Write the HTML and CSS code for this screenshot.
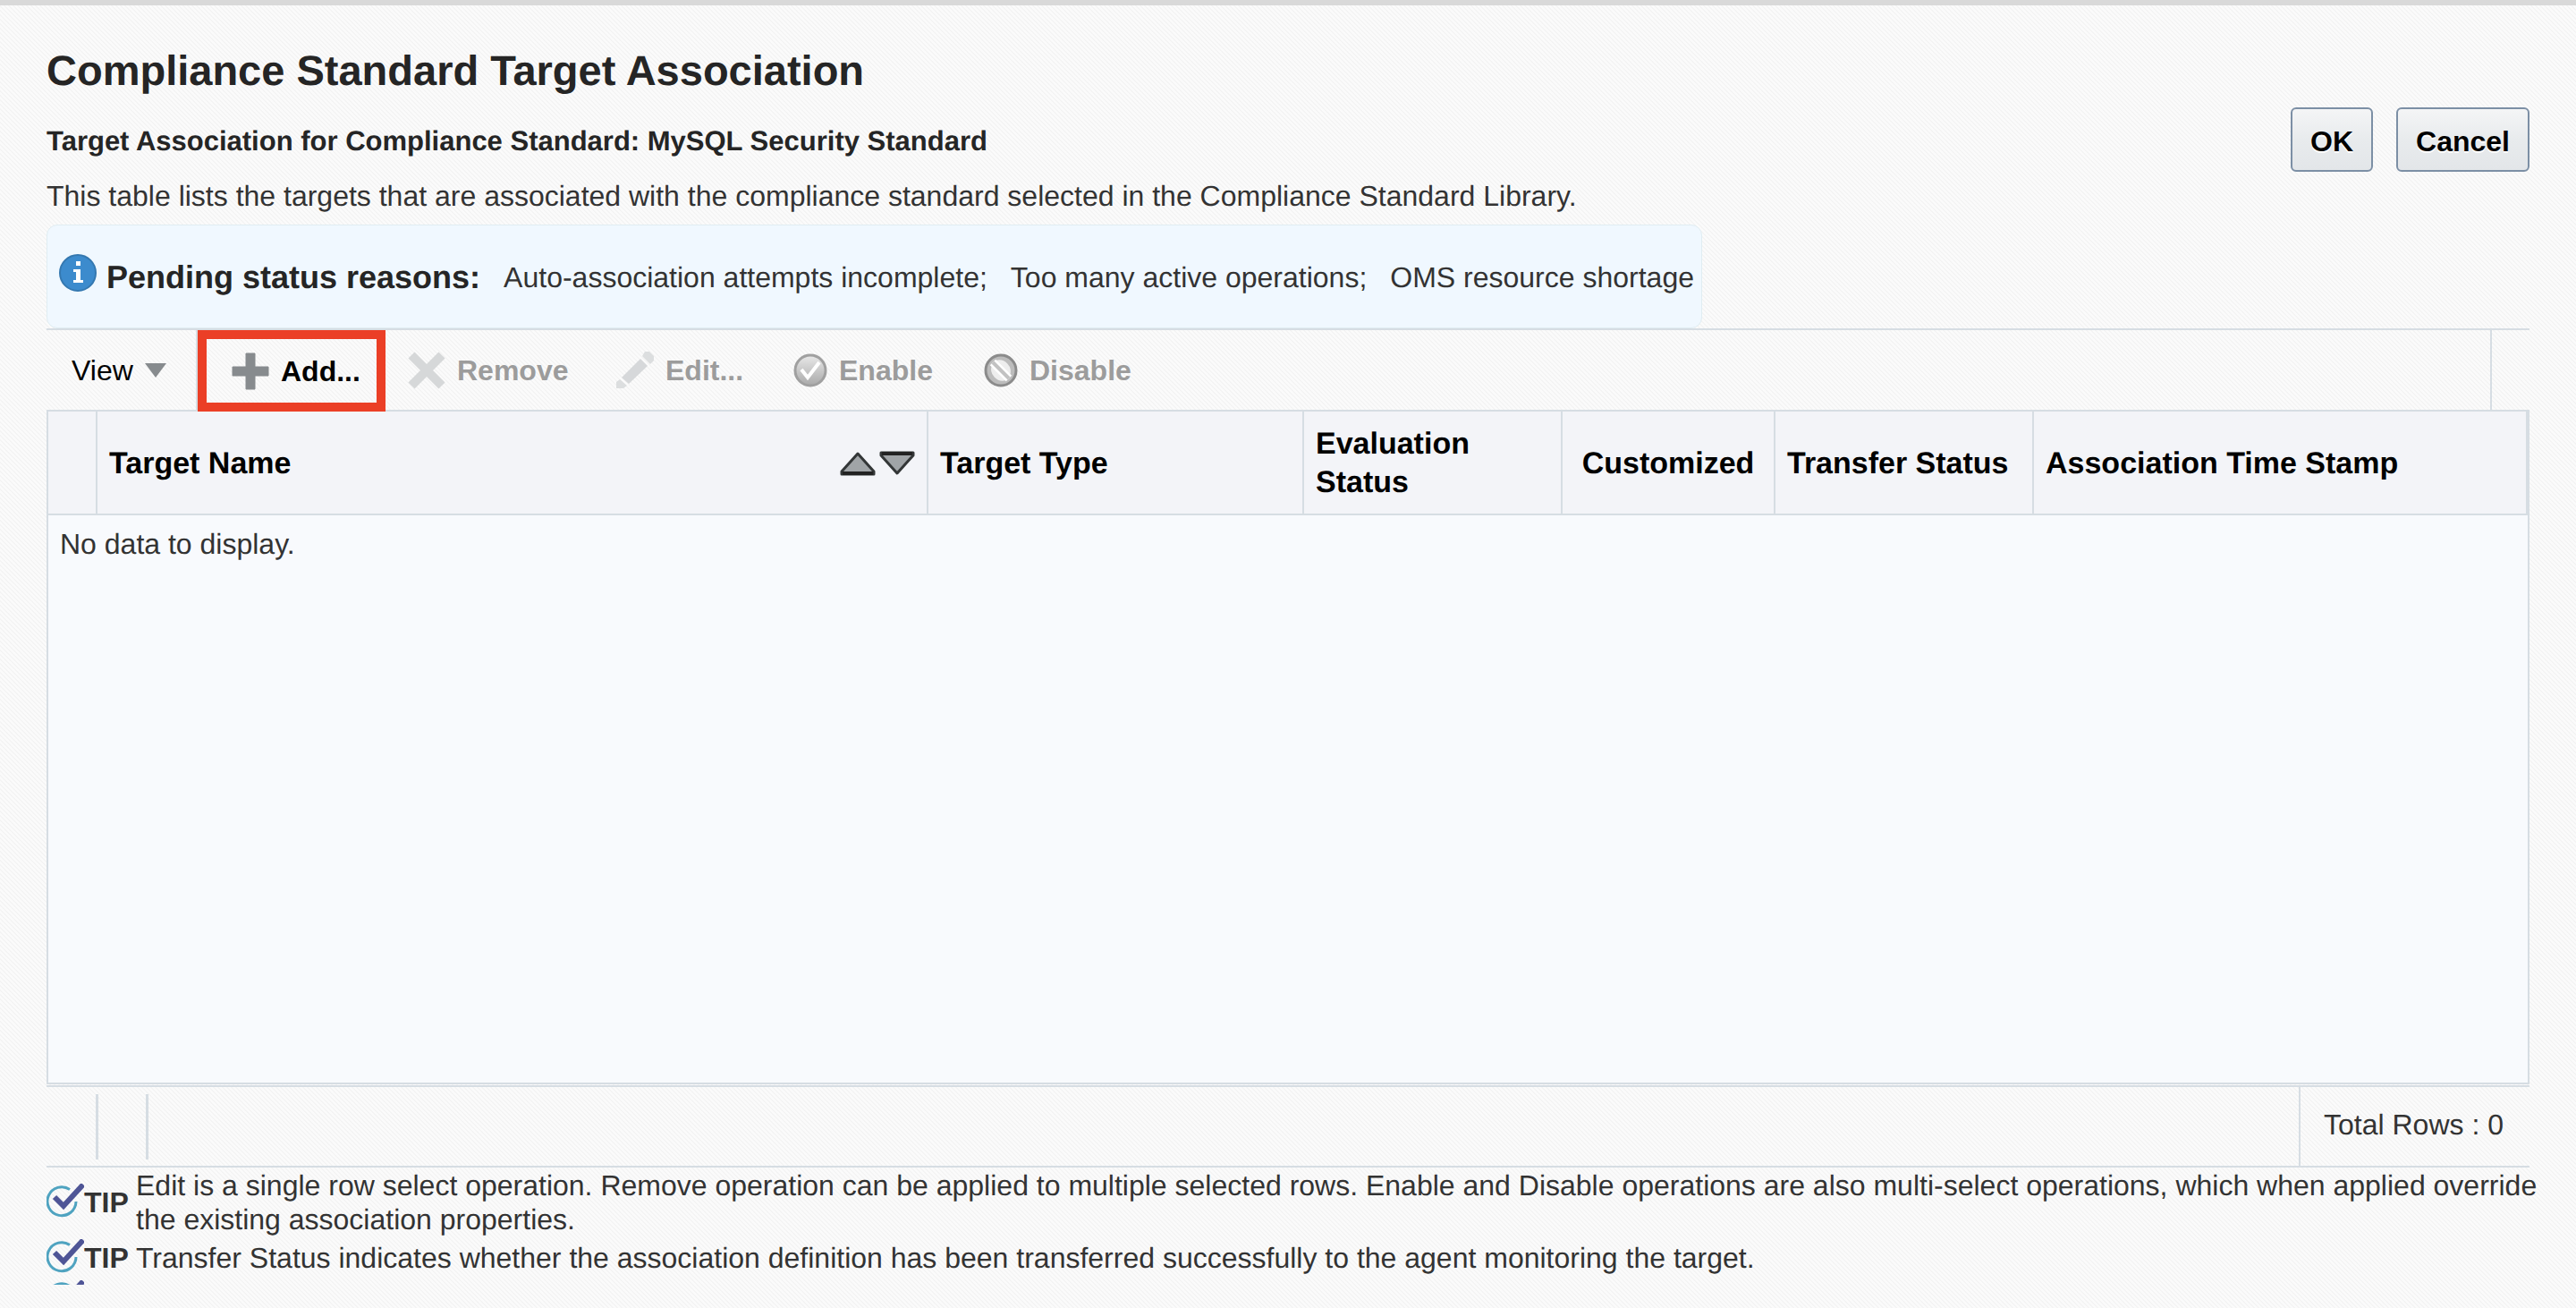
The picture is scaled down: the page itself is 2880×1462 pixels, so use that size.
FILE: index.html
```html
<!DOCTYPE html>
<html lang="en">
<head>
<meta charset="utf-8">
<title>Compliance Standard Target Association</title>
<link rel="stylesheet" href="styles.css">
</head>
<body>
<svg class="sprite" aria-hidden="true">
  <defs>
    <linearGradient id="metal" x1="0" y1="0" x2="0" y2="1">
      <stop offset="0" stop-color="#e9e9e9"/><stop offset="1" stop-color="#a9a9a9"/>
    </linearGradient>
    <symbol id="tip" viewBox="0 0 42 38">
      <path d="M26 6.500A16 16 0 1 0 33 20" fill="none" stroke="#4fa3c0" stroke-width="3"/>
      <path d="M9 15l10 10L41 1" fill="none" stroke="#4f5596" stroke-width="6"/>
    </symbol>
  </defs>
</svg>
<main class="page">
  <h1>Compliance Standard Target Association</h1>
  <div class="intro">
    <div class="intro-text">
      <h2>Target Association for Compliance Standard: MySQL Security Standard</h2>
      <p>This table lists the targets that are associated with the compliance standard selected in the Compliance Standard Library.</p>
    </div>
    <div class="actions">
      <button class="button" type="button">OK</button>
      <button class="button" type="button">Cancel</button>
    </div>
  </div>

  <div class="notice">
    <svg class="notice-icon" viewBox="0 0 42 42" aria-hidden="true"><circle cx="21" cy="21" r="20" fill="#3c8bcd" stroke="#3478b0" stroke-width="2"/><path d="M19 8h5v5h-5zM16 17h8v12h3v3H16v-3h3v-9h-3z" fill="#fff"/></svg>
    <strong>Pending status reasons:</strong>
    <span>Auto-association attempts incomplete;</span>
    <span>Too many active operations;</span>
    <span>OMS resource shortage</span>
  </div>

  <div class="toolbar" role="toolbar">
    <button class="tool view" type="button">View <svg width="24" height="18" viewBox="0 0 24 18" aria-hidden="true"><path d="M0 1h24L12 17z" fill="#878b8e"/></svg></button>
    <button class="tool add" type="button"><svg width="42" height="42" viewBox="0 0 42 42" aria-hidden="true"><path d="M16 1h10v15h15v10H26v15H16V26H1V16h15z" fill="#878b8e" stroke="#878b8e" stroke-linejoin="round"/></svg>Add...</button>
    <button class="tool remove" type="button" disabled><svg width="42" height="42" viewBox="0 0 42 42" aria-hidden="true"><path d="M4 4l34 34M38 4L4 38" stroke="#d6d8d9" stroke-width="10"/></svg>Remove</button>
    <button class="tool edit" type="button" disabled><svg width="42" height="42" viewBox="0 0 42 42" aria-hidden="true"><path d="M6 29L27 8l8 8-21 20z" fill="#d6d8da"/><path d="M4 31l8 7-4 3H0v-7zM29 5l3-5h5l5 5v5l-4 4z" fill="#dcdedf"/></svg>Edit...</button>
    <button class="tool enable" type="button" disabled><svg width="38" height="38" viewBox="0 0 38 38" aria-hidden="true"><circle cx="19" cy="19" r="17" fill="url(#metal)" stroke="#a0a0a0" stroke-width="3"/><path d="M9 18l7 9 13-17" fill="none" stroke="#fff" stroke-width="4"/></svg>Enable</button>
    <button class="tool" type="button" disabled><svg width="38" height="38" viewBox="0 0 38 38" aria-hidden="true"><circle cx="19" cy="19" r="17" fill="#bcbcbc" stroke="#8b8b8b" stroke-width="3"/><path d="M13 8a13 13 0 0 1 16 17zM9 13l16 17A13 13 0 0 1 9 13z" fill="#eee"/><path d="M10 10l18 18" stroke="#fff" stroke-width="9"/><path d="M10 10l18 18" stroke="#c2c2c2" stroke-width="4"/></svg>Disable</button>
    <span class="toolbar-end"></span>
  </div>

  <div class="grid">
    <table>
      <colgroup><col class="c-handle"><col class="c-name"><col class="c-type"><col class="c-eval"><col class="c-custom"><col class="c-transfer"><col></colgroup>
      <thead>
        <tr>
          <th></th>
          <th scope="col"><div class="sortable">Target Name
            <svg width="84" height="28" viewBox="0 0 84 28" aria-hidden="true"><g fill="#a0a4a7" stroke="#333637" stroke-width="3" stroke-linejoin="round"><path d="M2 26v-3L20 3l18 20v3z"/><path d="M46 2v3l18 20L82 5V2z"/></g><path d="M3 25h34M47 3h34" stroke="#222" stroke-width="4"/></svg></div></th>
          <th scope="col">Target Type</th>
          <th scope="col">Evaluation Status</th>
          <th scope="col" class="center">Customized</th>
          <th scope="col">Transfer Status</th>
          <th scope="col">Association Time Stamp</th>
        </tr>
      </thead>
      <tbody><tr><td colspan="7">No data to display.</td></tr></tbody>
    </table>
  </div>

  <div class="status">
    <span class="mark"></span><span class="mark"></span>
    <span class="total">Total Rows : 0</span>
  </div>

  <div class="tips">
    <div class="tip"><svg class="tip-icon" aria-hidden="true"><use href="#tip"/></svg><strong>TIP</strong><p>Edit is a single row select operation. Remove operation can be applied to multiple selected rows. Enable and Disable operations are also multi-select operations, which when applied override the existing association properties.</p></div>
    <div class="tip"><svg class="tip-icon" aria-hidden="true"><use href="#tip"/></svg><strong>TIP</strong><p>Transfer Status indicates whether the association definition has been transferred successfully to the agent monitoring the target.</p></div>
    <div class="tip"><svg class="tip-icon" aria-hidden="true"><use href="#tip"/></svg></div>
  </div>
</main>
</body>
</html>
```

FILE: styles.css
```css
* { box-sizing: border-box; }

body {
  margin: 0;
  color: #333;
  font: 32px/38px "Liberation Sans", Arial, sans-serif;
  text-rendering: geometricPrecision;
  background: linear-gradient(45deg, #fbfbfb 25%, #f4f4f4 25% 50%, #fbfbfb 50% 75%, #f4f4f4 75%) 0 0 / 5px 5px;
}

h1, h2, p { margin: 0; }

.sprite { position: absolute; width: 0; height: 0; }

.page {
  display: flex;
  flex-direction: column;
  height: 100vh;
  padding: 45px 52px 26px;
  border-top: 6px solid #d9d9d9;
}

h1 { color: #252525; font-size: 47px; line-height: 56px; }

.intro { display: flex; justify-content: space-between; padding-top: 13px; height: 144px; }
.intro-text { padding-top: 19px; }
h2 { color: #252525; font-size: 31px; line-height: 38px; }
.intro-text p { padding-top: 23px; }

.actions { display: flex; align-items: flex-start; gap: 26px; }
.button {
  height: 72px;
  padding: 4px 20px 0;
  border: 2px solid #7c8fa5;
  border-radius: 6px;
  background: linear-gradient(#f4f5f6, #e8ebed 50%, #e3e6e9);
  color: #000;
  font: bold 32px/38px "Liberation Sans", Arial, sans-serif;
  text-shadow: 0 2px 0 #fff;
}

.notice {
  display: flex;
  align-items: center;
  align-self: flex-start;
  gap: 26px;
  height: 116px;
  padding: 2px 8px 0 13px;
  border: 1px solid #e0edf2;
  border-radius: 12px;
  background: #f0f8ff;
}
.notice-icon { width: 42px; height: 42px; margin: 0 -15px 10px 0; }
.notice strong { color: #252525; font-size: 36px; }

.toolbar {
  display: flex;
  align-items: stretch;
  height: 93px;
  border: solid #d6dde3;
  border-width: 2px 0;
}
.tool {
  display: flex;
  align-items: center;
  gap: 13px;
  padding: 0;
  border: 0;
  background: none;
  color: #000;
  font: bold 32px/38px "Liberation Sans", Arial, sans-serif;
}
.tool:disabled { color: #9c9c9c; }
.view { width: 169px; padding-left: 28px; border-right: 2px solid #d6dde3; font-weight: normal; }
.add { width: 210px; margin-bottom: -2px; padding-left: 28px; border: 10px solid #eb3f26; }
.remove { width: 258px; padding-left: 25px; }
.edit { width: 198px; }
.enable { width: 213px; }
.toolbar-end { width: 44px; margin-left: auto; border-left: 2px solid #d6dde3; }

.grid {
  flex: 1;
  min-height: 0;
  border: 2px solid #d6dde3;
  border-top: 0;
  background: #f8fafd;
}
table { width: 100%; table-layout: fixed; border-collapse: separate; border-spacing: 0; }
.c-handle { width: 55px; }
.c-name { width: 929px; }
.c-type { width: 420px; }
.c-eval { width: 289px; }
.c-custom { width: 238px; }
.c-transfer { width: 289px; }
th {
  height: 116px;
  padding: 2px 13px 0;
  border: solid #d6dde3;
  border-width: 0 2px 2px 0;
  background: #f3f4f8;
  color: #000;
  font-size: 34px;
  line-height: 43px;
  text-align: left;
}
.center { text-align: center; }
.sortable { display: flex; align-items: center; justify-content: space-between; }
td { padding: 13px; }

.status {
  display: flex;
  align-items: center;
  height: 92px;
  margin-top: 1px;
  border: solid #d6dde3;
  border-width: 2px 0;
}
.mark { width: 56px; height: 73px; border-right: 3px solid #d6dde3; }
.mark:first-child { width: 58px; }
.total {
  align-self: stretch;
  width: 258px;
  margin-left: auto;
  padding: 23px 0 0 26px;
  border-left: 2px solid #d6dde3;
}

/* Tips may run a little into the right page margin. */
.tips { height: 131px; margin-right: -20px; padding-top: 1px; overflow: hidden; }
.tip { display: flex; align-items: center; min-height: 44px; margin-bottom: 2px; }
.tip-icon { flex: none; width: 42px; height: 38px; margin-bottom: 4px; }
.tip strong { flex: none; width: 58px; }
.tip p { flex: 1; }
```
